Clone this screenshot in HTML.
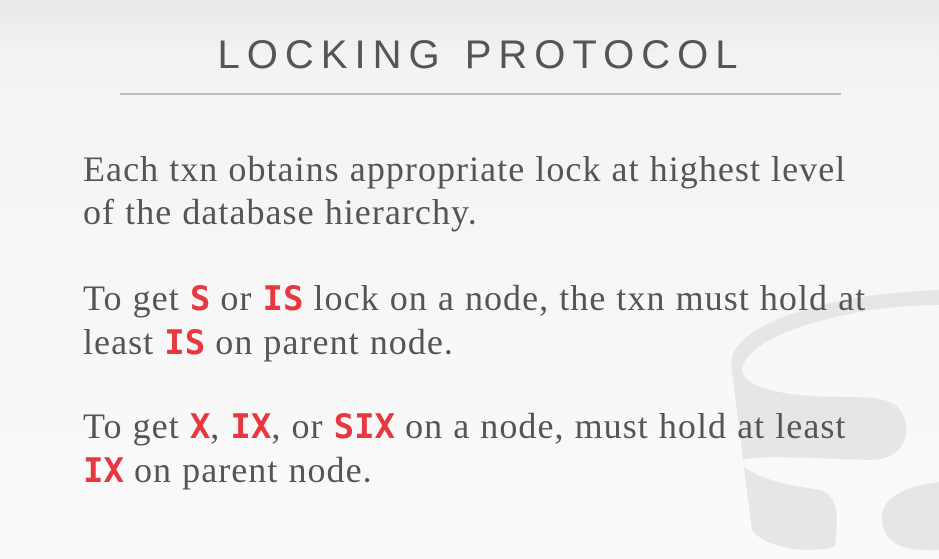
<!DOCTYPE html>
<html><head><style>
body{margin:0;width:939px;height:559px;overflow:hidden;background:linear-gradient(#e9e9e9 0px,#f3f3f3 60px,#f7f7f7 300px,#fafafa 559px);position:relative;font-family:"Liberation Serif",serif;}
h1{position:absolute;top:33px;left:0;width:962px;text-align:center;margin:0;font:300 40px "Liberation Sans",sans-serif;letter-spacing:7px;color:#555;}
.rule{position:absolute;left:120px;top:93px;width:721px;height:2px;background:#bdbdbd}
p{position:absolute;left:83px;margin:0;font-size:36px;line-height:43px;color:#555;white-space:nowrap;letter-spacing:1.05px}
b{font-family:"DejaVu Sans Mono",monospace;color:#e8383f;font-weight:bold;font-size:34px;letter-spacing:0}
svg{position:absolute;left:0;top:0}
</style></head><body>
<svg width="939" height="559">
<path d="M939 290 C840 293 735 320 731 362 L743 460 C760 455 800 458 870 460 C900 460 910 440 905 420 C900 400 880 397 850 397 C790 397 745 390 742 370 C745 335 850 305 939 305 Z" fill="#e6e6e6"/>
<path d="M744 467 C770 485 810 488 820 490 C840 497 838 520 835 547 C800 555 762 545 752 530 Z" fill="#e6e6e6"/>
<path d="M939 482 C900 487 880 500 882 520 C884 545 905 552 939 550 Z" fill="#e6e6e6"/>
</svg>
<h1>LOCKING PROTOCOL</h1>
<div class="rule"></div>
<p style="top:148px">Each txn obtains appropriate lock at highest level<br>of the database hierarchy.</p>
<p style="top:277px">To get <b>S</b> or <b>IS</b> lock on a node, the txn must hold at<br>least <b>IS</b> on parent node.</p>
<p style="top:405px">To get <b>X</b>, <b>IX</b>, or <b>SIX</b> on a node, must hold at least<br><b>IX</b> on parent node.</p>
</body></html>
